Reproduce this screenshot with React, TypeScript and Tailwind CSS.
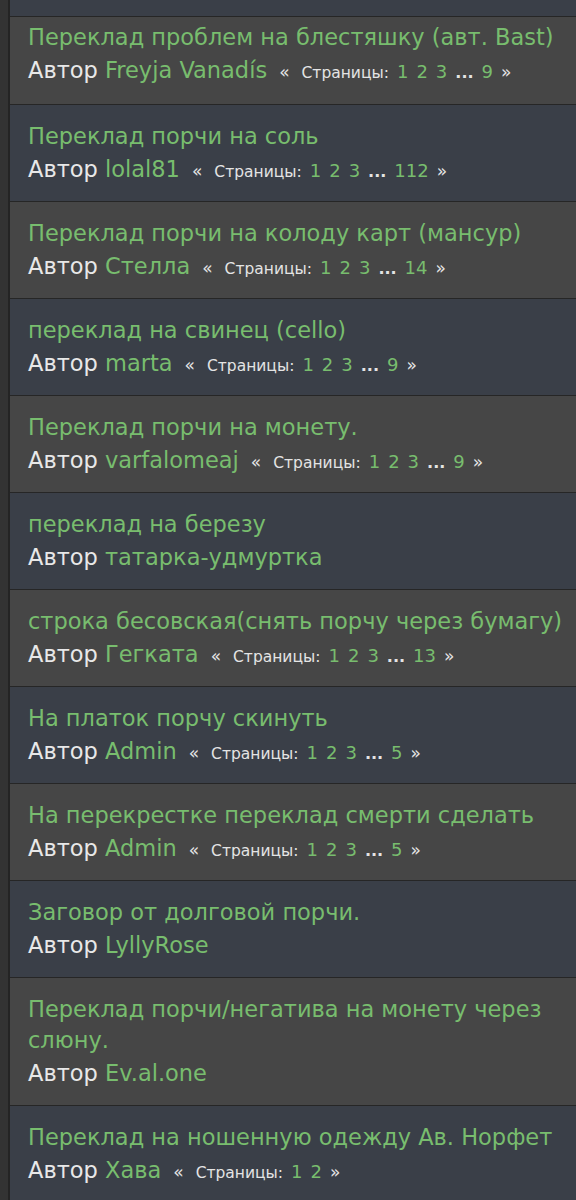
const topics = [
  { title: "Переклад проблем на блестяшку (авт. Bast)", author: "Freyja Vanadís", pages: ["1", "2", "3", "9"] },
  { title: "Переклад порчи на соль", author: "lolal81", pages: ["1", "2", "3", "112"] },
  { title: "Переклад порчи на колоду карт (мансур)", author: "Стелла", pages: ["1", "2", "3", "14"] },
  { title: "переклад на свинец (cello)", author: "marta", pages: ["1", "2", "3", "9"] },
  { title: "Переклад порчи на монету.", author: "varfalomeaj", pages: ["1", "2", "3", "9"] },
  { title: "переклад на березу", author: "татарка-удмуртка", pages: [] },
  { title: "строка бесовская(снять порчу через бумагу)", author: "Гегката", pages: ["1", "2", "3", "13"] },
  { title: "На платок порчу скинуть", author: "Admin", pages: ["1", "2", "3", "5"] },
  { title: "На перекрестке переклад смерти сделать", author: "Admin", pages: ["1", "2", "3", "5"] },
  { title: "Заговор от долговой порчи.", author: "LyllyRose", pages: [] },
  { title: "Переклад порчи/негатива на монету через слюну.", author: "Ev.al.one", pages: [] },
  { title: "Переклад на ношенную одежду Ав. Норфет", author: "Хава", pages: ["1", "2"] },
];

function Pages({ pages }: { pages: string[] }) {
  if (pages.length === 0) return null;
  const head = pages.length > 3 ? pages.slice(0, 3) : pages;
  const last = pages.length > 3 ? pages[pages.length - 1] : null;
  return (
    <span className="ml-3 inline-flex items-baseline leading-none text-[#e4e4e4]">
      <span className="text-[17px]">«</span>
      <span className="ml-3 text-[15.5px]">Страницы:</span>
      {head.map((p) => (
        <span key={p} className="ml-[8px] text-[18px] text-[#78bd6e]">{p}</span>
      ))}
      {last && (
        <>
          <span className="ml-[8px] text-[16px] font-bold">...</span>
          <span className="ml-[8px] text-[18px] text-[#78bd6e]">{last}</span>
        </>
      )}
      <span className="ml-[8px] text-[17px]">»</span>
    </span>
  );
}

export default function App() {
  return (
    <div className="flex min-h-[1200px] bg-[#333333] font-['DejaVu_Sans',sans-serif]">
      <div className="w-[8px] shrink-0 bg-[#333333]" />
      <div className="flex-1 border-l-2 border-[#242424]">
        <div className="h-[16px] bg-[#3a3f48]" />
        {topics.map((t, i) => (
          <div
            key={i}
            className={`border-t border-[#262626] pl-[18px] pr-1 ${i === 0 ? "pt-[5px] pb-[18px]" : "pt-[16px] pb-[16px]"} ${
              i % 2 === 0 ? "bg-[#464646]" : "bg-[#3a3f48]"
            }`}
          >
            <div className="text-[22.5px] leading-[31px] text-[#78bd6e]">{t.title}</div>
            <div className="mt-[2px] h-[31px] text-[22.5px] leading-[31px] text-[#e8e8e8] whitespace-nowrap">
              Автор <span className="text-[#78bd6e]">{t.author}</span>
              <Pages pages={t.pages} />
            </div>
          </div>
        ))}
      </div>
    </div>
  );
}
